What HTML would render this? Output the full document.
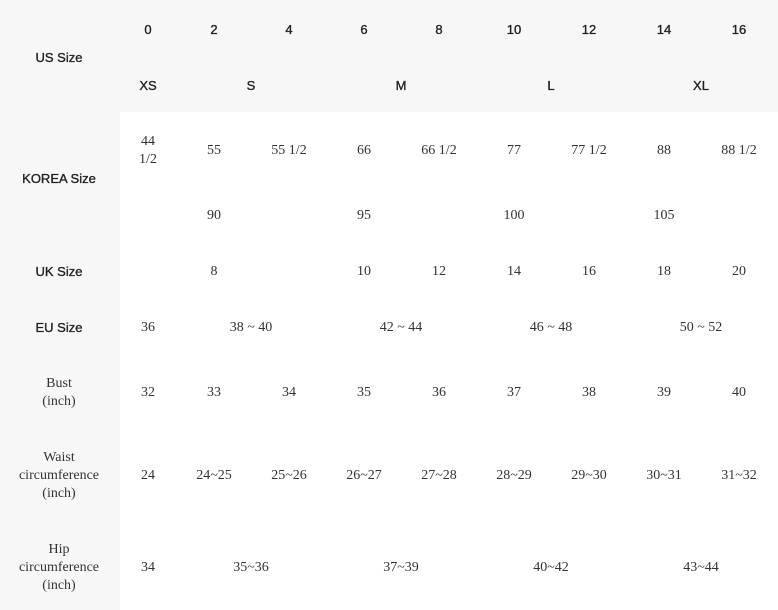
<!DOCTYPE html>
<html><head><meta charset="utf-8"><style>
body{margin:0;width:778px;height:610px;background:#f7f7f7;position:relative;overflow:hidden}
#w{position:absolute;left:120px;top:112px;width:658px;height:498px;background:#fff}
.h,.v{position:absolute;transform:translate(-50%,calc(-50% + 2px));text-align:center;white-space:nowrap;line-height:18px}
.h{font-family:"Liberation Sans",sans-serif;font-size:13px;color:#222;-webkit-text-stroke:0.35px #222}
.v{font-family:"Liberation Serif",serif;font-size:14px;color:#333}
</style></head><body>
<div id="w"></div>
<div class="h" style="left:148px;top:28px">0</div>
<div class="h" style="left:214px;top:28px">2</div>
<div class="h" style="left:289px;top:28px">4</div>
<div class="h" style="left:364px;top:28px">6</div>
<div class="h" style="left:439px;top:28px">8</div>
<div class="h" style="left:514px;top:28px">10</div>
<div class="h" style="left:589px;top:28px">12</div>
<div class="h" style="left:664px;top:28px">14</div>
<div class="h" style="left:739px;top:28px">16</div>
<div class="h" style="left:59px;top:56px">US Size</div>
<div class="h" style="left:148px;top:84px">XS</div>
<div class="h" style="left:251px;top:84px">S</div>
<div class="h" style="left:401px;top:84px">M</div>
<div class="h" style="left:551px;top:84px">L</div>
<div class="h" style="left:701px;top:84px">XL</div>
<div class="h" style="left:59px;top:177px">KOREA Size</div>
<div class="h" style="left:59px;top:270px">UK Size</div>
<div class="h" style="left:59px;top:326px">EU Size</div>

<div class="v" style="left:148px;top:149px">44<br>1/2</div>
<div class="v" style="left:214px;top:149px">55</div>
<div class="v" style="left:289px;top:149px">55 1/2</div>
<div class="v" style="left:364px;top:149px">66</div>
<div class="v" style="left:439px;top:149px">66 1/2</div>
<div class="v" style="left:514px;top:149px">77</div>
<div class="v" style="left:589px;top:149px">77 1/2</div>
<div class="v" style="left:664px;top:149px">88</div>
<div class="v" style="left:739px;top:149px">88 1/2</div>

<div class="v" style="left:214px;top:214px">90</div>
<div class="v" style="left:364px;top:214px">95</div>
<div class="v" style="left:514px;top:214px">100</div>
<div class="v" style="left:664px;top:214px">105</div>

<div class="v" style="left:214px;top:270px">8</div>
<div class="v" style="left:364px;top:270px">10</div>
<div class="v" style="left:439px;top:270px">12</div>
<div class="v" style="left:514px;top:270px">14</div>
<div class="v" style="left:589px;top:270px">16</div>
<div class="v" style="left:664px;top:270px">18</div>
<div class="v" style="left:739px;top:270px">20</div>

<div class="v" style="left:148px;top:326px">36</div>
<div class="v" style="left:251px;top:326px">38 ~ 40</div>
<div class="v" style="left:401px;top:326px">42 ~ 44</div>
<div class="v" style="left:551px;top:326px">46 ~ 48</div>
<div class="v" style="left:701px;top:326px">50 ~ 52</div>

<div class="v" style="left:59px;top:391px">Bust<br>(inch)</div>
<div class="v" style="left:148px;top:391px">32</div>
<div class="v" style="left:214px;top:391px">33</div>
<div class="v" style="left:289px;top:391px">34</div>
<div class="v" style="left:364px;top:391px">35</div>
<div class="v" style="left:439px;top:391px">36</div>
<div class="v" style="left:514px;top:391px">37</div>
<div class="v" style="left:589px;top:391px">38</div>
<div class="v" style="left:664px;top:391px">39</div>
<div class="v" style="left:739px;top:391px">40</div>

<div class="v" style="left:59px;top:474px">Waist<br>circumference<br>(inch)</div>
<div class="v" style="left:148px;top:474px">24</div>
<div class="v" style="left:214px;top:474px">24~25</div>
<div class="v" style="left:289px;top:474px">25~26</div>
<div class="v" style="left:364px;top:474px">26~27</div>
<div class="v" style="left:439px;top:474px">27~28</div>
<div class="v" style="left:514px;top:474px">28~29</div>
<div class="v" style="left:589px;top:474px">29~30</div>
<div class="v" style="left:664px;top:474px">30~31</div>
<div class="v" style="left:739px;top:474px">31~32</div>

<div class="v" style="left:59px;top:566px">Hip<br>circumference<br>(inch)</div>
<div class="v" style="left:148px;top:566px">34</div>
<div class="v" style="left:251px;top:566px">35~36</div>
<div class="v" style="left:401px;top:566px">37~39</div>
<div class="v" style="left:551px;top:566px">40~42</div>
<div class="v" style="left:701px;top:566px">43~44</div>
</body></html>
